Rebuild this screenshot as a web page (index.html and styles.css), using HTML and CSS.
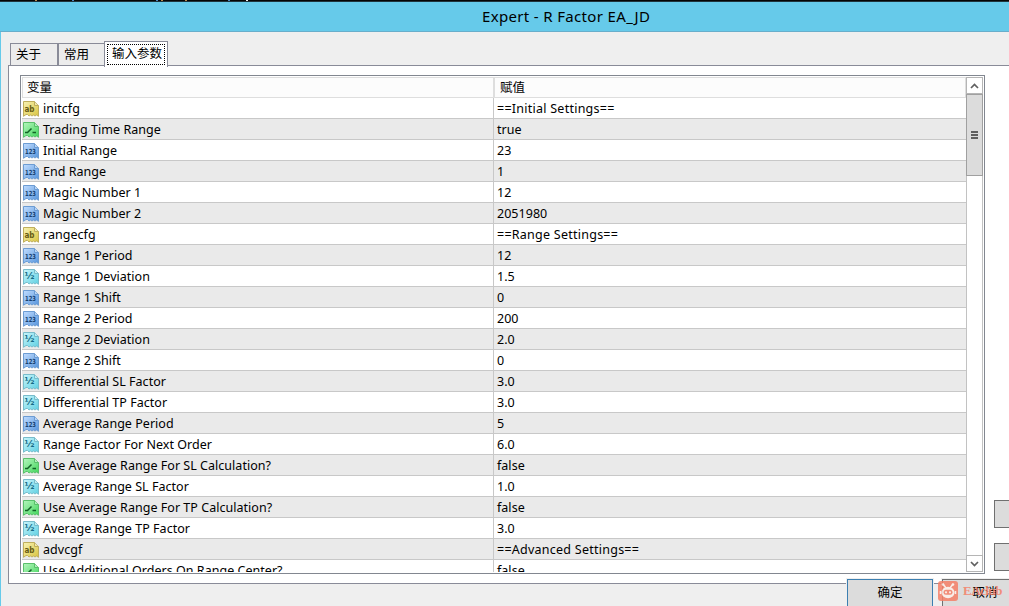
FILE: index.html
```html
<!DOCTYPE html>
<html lang="zh-CN">
<head>
<meta charset="utf-8">
<title>Expert - R Factor EA_JD</title>
<link rel="stylesheet" href="styles.css">
</head>
<body>
<svg class="defs" aria-hidden="true">
  <defs>
    <linearGradient id="g-str" x2="1" y2="1"><stop offset="0" stop-color="#f8f2b2"/><stop offset="1" stop-color="#d9c441"/></linearGradient>
    <linearGradient id="g-bool" x2="1" y2="1"><stop offset="0" stop-color="#b5f5bd"/><stop offset="1" stop-color="#42d65c"/></linearGradient>
    <linearGradient id="g-int" x2="1" y2="1"><stop offset="0" stop-color="#c0dcff"/><stop offset="1" stop-color="#5795dc"/></linearGradient>
    <linearGradient id="g-dbl" x2="1" y2="1"><stop offset="0" stop-color="#c9f5fb"/><stop offset="1" stop-color="#5fd0e2"/></linearGradient>
    <path id="page" d="M.5 .5H11.5L15.5 4.5V15.3L13.5 14L12 15L10.500 14L9 15L7.500 14L6 15L4.500 13.500L3 13.500L.5 15.300Z"/>
    <path id="fold" d="M11.500 .5V4.500H15.500"/>
  </defs>
</svg>
<div class="desktop-strip"><i class="s1"></i><i class="s2"></i><i class="s3"></i><i class="s4"></i><i class="s5"></i><i class="s6"></i><i class="s7"></i></div>
<header class="titlebar"><span>Expert - R Factor EA_JD</span></header>
<main class="dialog">
  <nav class="tabs">
    <div class="tab about">关于</div>
    <div class="tab common">常用</div>
    <div class="tab active"><span>输入参数</span></div>
  </nav>
  <section class="panel">
    <div class="list">
      <div class="table">
        <div class="head"><div class="name">变量</div><div class="value">赋值</div></div>
        <div id="rows"></div>
      </div>
      <div class="scrollbar">
        <div class="arrow"><svg width="9" height="6"><path d="M1 5L4.500 1.500L8 5"/></svg></div>
        <div class="thumb"><b></b><b></b><b></b></div>
        <div class="track"></div>
        <div class="arrow"><svg width="9" height="6"><path d="M1 1L4.500 4.500L8 1"/></svg></div>
      </div>
    </div>
    <aside class="side"><button></button><button></button></aside>
  </section>
</main>
<footer class="actions">
  <button class="ok">确定</button>
  <button class="cancel">取消</button>
</footer>
<div class="watermark">
  <svg width="20" height="20" viewBox="0 0 20 20"><rect width="20" height="20" rx="3" fill="#f58067"/><path d="M5 3L8 7M15 3L12 7" stroke="#fff0e9" stroke-width="1.500"/><circle cx="5" cy="3.500" r="1.300" fill="#fff0e9"/><circle cx="15" cy="3.500" r="1.300" fill="#fff0e9"/><ellipse cx="10" cy="11.500" rx="6.500" ry="5.700" fill="#fff0e9"/><path d="M2.500 10V13M17.500 10V13" stroke="#fff0e9" stroke-width="1.500"/><rect x="5.500" y="8.800" width="9" height="5" rx="2.500" fill="#f58067"/><circle cx="8" cy="11.300" r="1.100" fill="#fff0e9"/><circle cx="12" cy="11.300" r="1.100" fill="#fff0e9"/></svg>
  <span>EAclub</span>
</div>
<script src="rows.js"></script>
</body>
</html>
```
FILE: rows.js
```js
const rows = [
  ["str", "initcfg", "==Initial Settings=="],
  ["bool", "Trading Time Range", "true"],
  ["int", "Initial Range", "23"],
  ["int", "End Range", "1"],
  ["int", "Magic Number 1", "12"],
  ["int", "Magic Number 2", "2051980"],
  ["str", "rangecfg", "==Range Settings=="],
  ["int", "Range 1 Period", "12"],
  ["dbl", "Range 1 Deviation", "1.5"],
  ["int", "Range 1 Shift", "0"],
  ["int", "Range 2 Period", "200"],
  ["dbl", "Range 2 Deviation", "2.0"],
  ["int", "Range 2 Shift", "0"],
  ["dbl", "Differential SL Factor", "3.0"],
  ["dbl", "Differential TP Factor", "3.0"],
  ["int", "Average Range Period", "5"],
  ["dbl", "Range Factor For Next Order", "6.0"],
  ["bool", "Use Average Range For SL Calculation?", "false"],
  ["dbl", "Average Range SL Factor", "1.0"],
  ["bool", "Use Average Range For TP Calculation?", "false"],
  ["dbl", "Average Range TP Factor", "3.0"],
  ["str", "advcgf", "==Advanced Settings=="],
  ["bool", "Use Additional Orders On Range Center?", "false"]
];
const marks = {
  str: '<text x="1.500" y="10.500" font-size="8.500" textLength="10" lengthAdjust="spacingAndGlyphs">ab</text>',
  bool: '<path class="mark" d="M2 10.500H4.500L8.500 6.500M9.500 10.500H13"/>',
  int: '<text x="2" y="10.500" font-size="7" textLength="11" lengthAdjust="spacingAndGlyphs">123</text>',
  dbl: '<text x="1.500" y="10" font-size="9" textLength="10" lengthAdjust="spacingAndGlyphs">½</text>'
};
document.getElementById("rows").innerHTML = rows.map(([type, name, value]) =>
  `<div class="row"><div class="name"><svg class="icon ${type}" width="16" height="16"><use href="#page" fill="url(#g-${type})"/><use href="#fold" fill="#fff" fill-opacity=".4"/>${marks[type]}</svg><span>${name}</span></div><div class="value${type === "str" ? " section" : ""}">${value}</div></div>`
).join("");
```
FILE: styles.css
```css
* { box-sizing: border-box; }
body {
  margin: 0;
  width: 1009px;
  height: 606px;
  overflow: hidden;
  position: relative;
  background: #efefef;
  color: #000;
  font: 12.5px/20px "Noto Sans", "Noto Sans CJK SC", sans-serif;
}
.defs { position: absolute; width: 0; height: 0; }
.desktop-strip { position: relative; height: 2px; background: #050505; border-bottom: 1px solid #20343c; }
.desktop-strip i { position: absolute; top: 0; width: 2px; height: 1px; background: #b98b4c; }
.desktop-strip .s1 { left: 35px; }
.desktop-strip .s2 { left: 72px; background: #4a86bd; }
.desktop-strip .s3 { left: 156px; background: #4a86bd; }
.desktop-strip .s4 { left: 161px; }
.desktop-strip .s5 { left: 185px; }
.desktop-strip .s6 { left: 228px; background: #4a86bd; }
.desktop-strip .s7 { left: 246px; background: #eee; }
.titlebar {
  height: 30px;
  padding-left: 482px;
  background: #66caea;
  border-bottom: 1px solid #68aecb;
  font-size: 15px;
  line-height: 29px;
  white-space: nowrap;
}
.titlebar span { letter-spacing: .34px; }
.dialog { height: 574px; padding: 9px 0 0 7px; border-left: 1px solid #66caea; }
.tabs { display: flex; align-items: flex-end; height: 24px; padding-left: 1px; }
.tab {
  height: 22px;
  border: 1px solid #898b98;
  border-bottom: 0;
  padding-left: 5px;
  line-height: 21px;
  background: #ececec;
}
.about { width: 48px; margin-left: 1px; border-right: 0; }
.common { width: 47px; border-left-width: 2px; margin-left: -1px; width: 48px; border-right: 0; }
.active { width: 64px; height: 26px; margin: 0 0 -2px -1px; padding: 2px; background: #fff; z-index: 1; }
.active span { display: block; height: 21px; padding-left: 4px; border: 1px dotted #000; line-height: 18px; white-space: nowrap; }
.panel {
  display: flex;
  align-items: flex-start;
  width: 1001px;
  height: 519px;
  padding: 9px 0 0 11px;
  background: #fff;
  border: 1px solid #898b98;
  border-right: 0;
}
.list { display: flex; width: 965px; height: 499px; padding: 1px; border: 1px solid #828790; }
.table { width: 945px; height: 495px; overflow: hidden; }
.head { display: flex; height: 21px; background: #fcfcfc; border: 1px solid #dedede; line-height: 20px; }
.head .name { width: 472px; padding-left: 4px; border-right: 2px solid #dedede; }
.head .value { padding-left: 5px; }
.row { display: flex; height: 21px; border-bottom: 1px solid #c8c8c8; line-height: 22px; letter-spacing: .03px; white-space: nowrap; }
.row:nth-child(even) { background: #eaeaea; }
.row .name { display: flex; width: 472px; padding: 0 0 0 1px; border-right: 1px solid #c8c8c8; }
.row .name span { margin-left: 4px; }
.row .value { padding-left: 3px; }
.row .section { letter-spacing: .25px; }
.icon { margin-top: 3px; overflow: visible; font-family: "DejaVu Sans", sans-serif; font-weight: bold; letter-spacing: 0; }
.str { stroke: #bfae5c; } .str text { fill: #665b12; }
.bool { stroke: #5abf6b; }
.int { stroke: #6c9cd3; } .int text { fill: #173f70; }
.dbl { stroke: #78bccb; } .dbl text { fill: #156b86; }
.icon text { stroke: none; }
.mark { stroke: #126326; stroke-width: 1.5px; fill: none; }
.scrollbar { display: flex; flex-direction: column; width: 17px; height: 495px; border-right: 1px solid #c2c2c2; background: #fff; }
.arrow { display: flex; align-items: center; justify-content: center; width: 17px; height: 17px; border: 1px solid #b5b5b5; }
.arrow path { fill: none; stroke: #606060; stroke-width: 1.7px; }
.thumb { display: flex; flex-direction: column; align-items: center; justify-content: center; gap: 1px; width: 17px; height: 82px; background: #dcdcdc; border: 1px solid #a0a0a0; }
.thumb b { width: 7px; height: 2px; background: #606060; }
.track { flex: 1; border-left: 1px solid #c2c2c2; }
.side { display: flex; flex-direction: column; gap: 15px; margin: 425px 0 0 9px; }
.side button { width: 60px; height: 28px; padding: 0; border: 1px solid #707070; background: #dcdcdc; }
.actions { position: absolute; left: 847px; top: 579px; display: flex; gap: 9px; }
.actions button {
  width: 86px;
  height: 34px;
  padding: 0 0 6px;
  border: 1px solid #707070;
  background: #dcdcdc;
  box-shadow: 0 0 0 1px #efefef;
  font: 12.5px/20px "Noto Sans", "Noto Sans CJK SC", sans-serif;
  color: #000;
}
.actions .ok { border-color: #3c7fb1; }
.watermark { position: absolute; left: 938px; top: 581px; display: flex; align-items: center; gap: 5px; height: 20px; opacity: .85; color: #f58067; }
.watermark span { font: bold 13px/20px "Liberation Serif", serif; letter-spacing: -.5px; }
```
